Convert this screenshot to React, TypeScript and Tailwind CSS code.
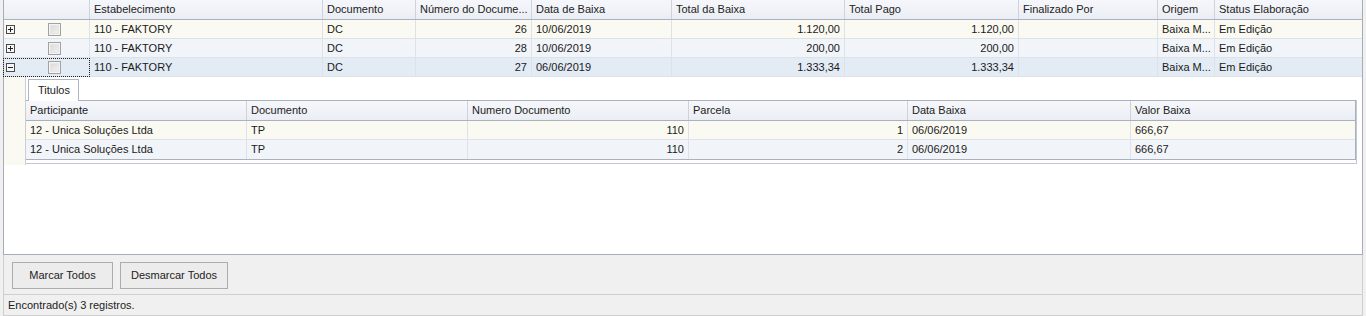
import React from "react";

const mainCols = [
  { key: "sel", w: 86 },
  { key: "Estabelecimento", w: 233 },
  { key: "Documento", w: 93 },
  { key: "Número do Docume...", w: 116 },
  { key: "Data de Baixa", w: 140 },
  { key: "Total da Baixa", w: 173 },
  { key: "Total Pago", w: 174 },
  { key: "Finalizado Por", w: 139 },
  { key: "Origem", w: 57 },
  { key: "Status Elaboração", w: 147 },
];

const rows = [
  { est: "110 - FAKTORY", doc: "DC", num: "26", data: "10/06/2019", tb: "1.120,00", tp: "1.120,00", fin: "", orig: "Baixa M...", st: "Em Edição", bg: "bg-[#fafaf2]", open: false },
  { est: "110 - FAKTORY", doc: "DC", num: "28", data: "10/06/2019", tb: "200,00", tp: "200,00", fin: "", orig: "Baixa M...", st: "Em Edição", bg: "bg-[#f1f4f9]", open: false },
  { est: "110 - FAKTORY", doc: "DC", num: "27", data: "06/06/2019", tb: "1.333,34", tp: "1.333,34", fin: "", orig: "Baixa M...", st: "Em Edição", bg: "bg-[#e3ebf5]", open: true },
];

const detCols = [
  { t: "Participante", w: 221 },
  { t: "Documento", w: 221 },
  { t: "Numero Documento", w: 221 },
  { t: "Parcela", w: 219 },
  { t: "Data Baixa", w: 223 },
  { t: "Valor Baixa", w: 226 },
];

const detRows = [
  { p: "12 - Unica Soluções Ltda", d: "TP", n: "110", pa: "1", db: "06/06/2019", v: "666,67", bg: "bg-[#fafaf2]" },
  { p: "12 - Unica Soluções Ltda", d: "TP", n: "110", pa: "2", db: "06/06/2019", v: "666,67", bg: "bg-[#f1f4f9]" },
];

function Expander({ open }: { open: boolean }) {
  return (
    <div className="relative w-[9px] h-[9px] border border-[#4a4a4a] bg-[#f6f6f6]">
      <div className="absolute left-[1px] top-[3px] w-[5px] h-[1px] bg-[#222]" />
      {!open && <div className="absolute left-[3px] top-[1px] w-[1px] h-[5px] bg-[#222]" />}
    </div>
  );
}

function Check() {
  return (
    <div className="w-[13px] h-[13px] border border-[#a2a2a2] bg-[#f4f4f4] p-[1px]">
      <div className="w-full h-full bg-linear-to-br from-[#dcdcdc] to-[#f0f0f0] border border-[#e6e6e6]" />
    </div>
  );
}

function Cell({ w, children, right, last }: { w: number; children?: React.ReactNode; right?: boolean; last?: boolean }) {
  return (
    <div
      style={{ width: w }}
      className={`h-full shrink-0 flex items-center px-[4px] whitespace-nowrap overflow-hidden ${right ? "justify-end" : ""} ${last ? "" : "border-r border-[#dde1e8]"}`}
    >
      {children}
    </div>
  );
}

export default function App() {
  return (
    <div className="w-[1366px] h-[316px] bg-[#f0f0f0] text-[11px] leading-none text-[#1a1a1a] font-['Liberation_Sans',Arial,sans-serif] overflow-hidden">
      {/* Grid */}
      <div className="ml-[3px] w-[1360px] h-[255px] border-x border-b border-[#a5adba] bg-white flex flex-col">
        {/* Header */}
        <div className="h-[20px] flex border-b border-[#a9b1bd] bg-linear-to-b from-[#f6f7fb] to-[#eaeef4] text-[#222]">
          {mainCols.map((c, i) => (
            <div
              key={c.key}
              style={{ width: c.w }}
              className={`h-full shrink-0 flex items-center px-[4px] whitespace-nowrap overflow-hidden ${i === mainCols.length - 1 ? "" : "border-r border-[#cdd3dc]"}`}
            >
              {c.key === "sel" ? "" : c.key}
            </div>
          ))}
        </div>
        {/* Rows */}
        {rows.map((r, i) => (
          <div key={i} className={`h-[19px] flex border-b border-[#dde1e8] ${r.bg}`}>
            <div
              style={{ width: 86 }}
              className={`h-full shrink-0 flex items-center border-r border-[#dde1e8] relative`}
            >
              <div className="ml-[2px]">
                <Expander open={r.open} />
              </div>
              <div className="ml-[33px]">
                <Check />
              </div>
              {r.open && <div className="absolute inset-x-[-1px] top-0 bottom-[-1px] border border-dotted border-[#222] pointer-events-none" />}
            </div>
            <Cell w={233}>{r.est}</Cell>
            <Cell w={93}>{r.doc}</Cell>
            <Cell w={116} right>{r.num}</Cell>
            <Cell w={140}>{r.data}</Cell>
            <Cell w={173} right>{r.tb}</Cell>
            <Cell w={174} right>{r.tp}</Cell>
            <Cell w={139}>{r.fin}</Cell>
            <Cell w={57}>{r.orig}</Cell>
            <Cell w={147} last>{r.st}</Cell>
          </div>
        ))}
        {/* Detail */}
        <div className="h-[88px] flex">
          <div className="w-[22px] h-full bg-[#fafaf2] border-r border-[#c9ced6]" />
          <div className="flex-1 flex flex-col pt-[2px]">
            <div className="h-[21px] flex">
              <div className="ml-[2px] w-[51px] h-[22px] border-x border-t border-[#aeb6c2] bg-white flex items-center pl-[9px] relative z-10 text-[#222]">
                Titulos
              </div>
            </div>
            <div className="w-[1331px] border-r border-b border-[#c2c8d1] pb-[3px]">
              <div className="border-t border-r border-b border-[#a9b1bd]">
                <div className="h-[20px] flex border-b border-[#a9b1bd] bg-linear-to-b from-[#f6f7fb] to-[#eaeef4] text-[#222]">
                  {detCols.map((c, i) => (
                    <div
                      key={c.t}
                      style={{ width: c.w }}
                      className={`h-full shrink-0 flex items-center px-[4px] whitespace-nowrap ${i === detCols.length - 1 ? "" : "border-r border-[#cdd3dc]"}`}
                    >
                      {c.t}
                    </div>
                  ))}
                </div>
                {detRows.map((r, i) => (
                  <div key={i} className={`h-[19px] flex ${i === 0 ? "border-b border-[#dde1e8]" : ""} ${r.bg}`}>
                    <Cell w={221}>{r.p}</Cell>
                    <Cell w={221}>{r.d}</Cell>
                    <Cell w={221} right>{r.n}</Cell>
                    <Cell w={219} right>{r.pa}</Cell>
                    <Cell w={223}>{r.db}</Cell>
                    <Cell w={225} last>{r.v}</Cell>
                  </div>
                ))}
              </div>
            </div>
          </div>
        </div>
        <div className="flex-1 bg-white" />
      </div>
      {/* Buttons */}
      <div className="ml-[3px] w-[1360px] h-[39px] border-x border-[#cfcfcf] flex items-center gap-[7px] pl-[8px] pt-[1px]">
        <button className="w-[101px] h-[27px] border border-[#acacac] bg-[#ececec] text-[#222] text-[11px] font-['Liberation_Sans',Arial,sans-serif]">
          Marcar Todos
        </button>
        <button className="w-[108px] h-[27px] border border-[#acacac] bg-[#ececec] text-[#222] text-[11px] font-['Liberation_Sans',Arial,sans-serif]">
          Desmarcar Todos
        </button>
      </div>
      {/* Status */}
      <div className="ml-[3px] w-[1360px] h-[22px] border-x border-b border-t border-[#cfcfcf] flex items-center pl-[4px] text-[#222]">
        Encontrado(s) 3 registros.
      </div>
    </div>
  );
}
